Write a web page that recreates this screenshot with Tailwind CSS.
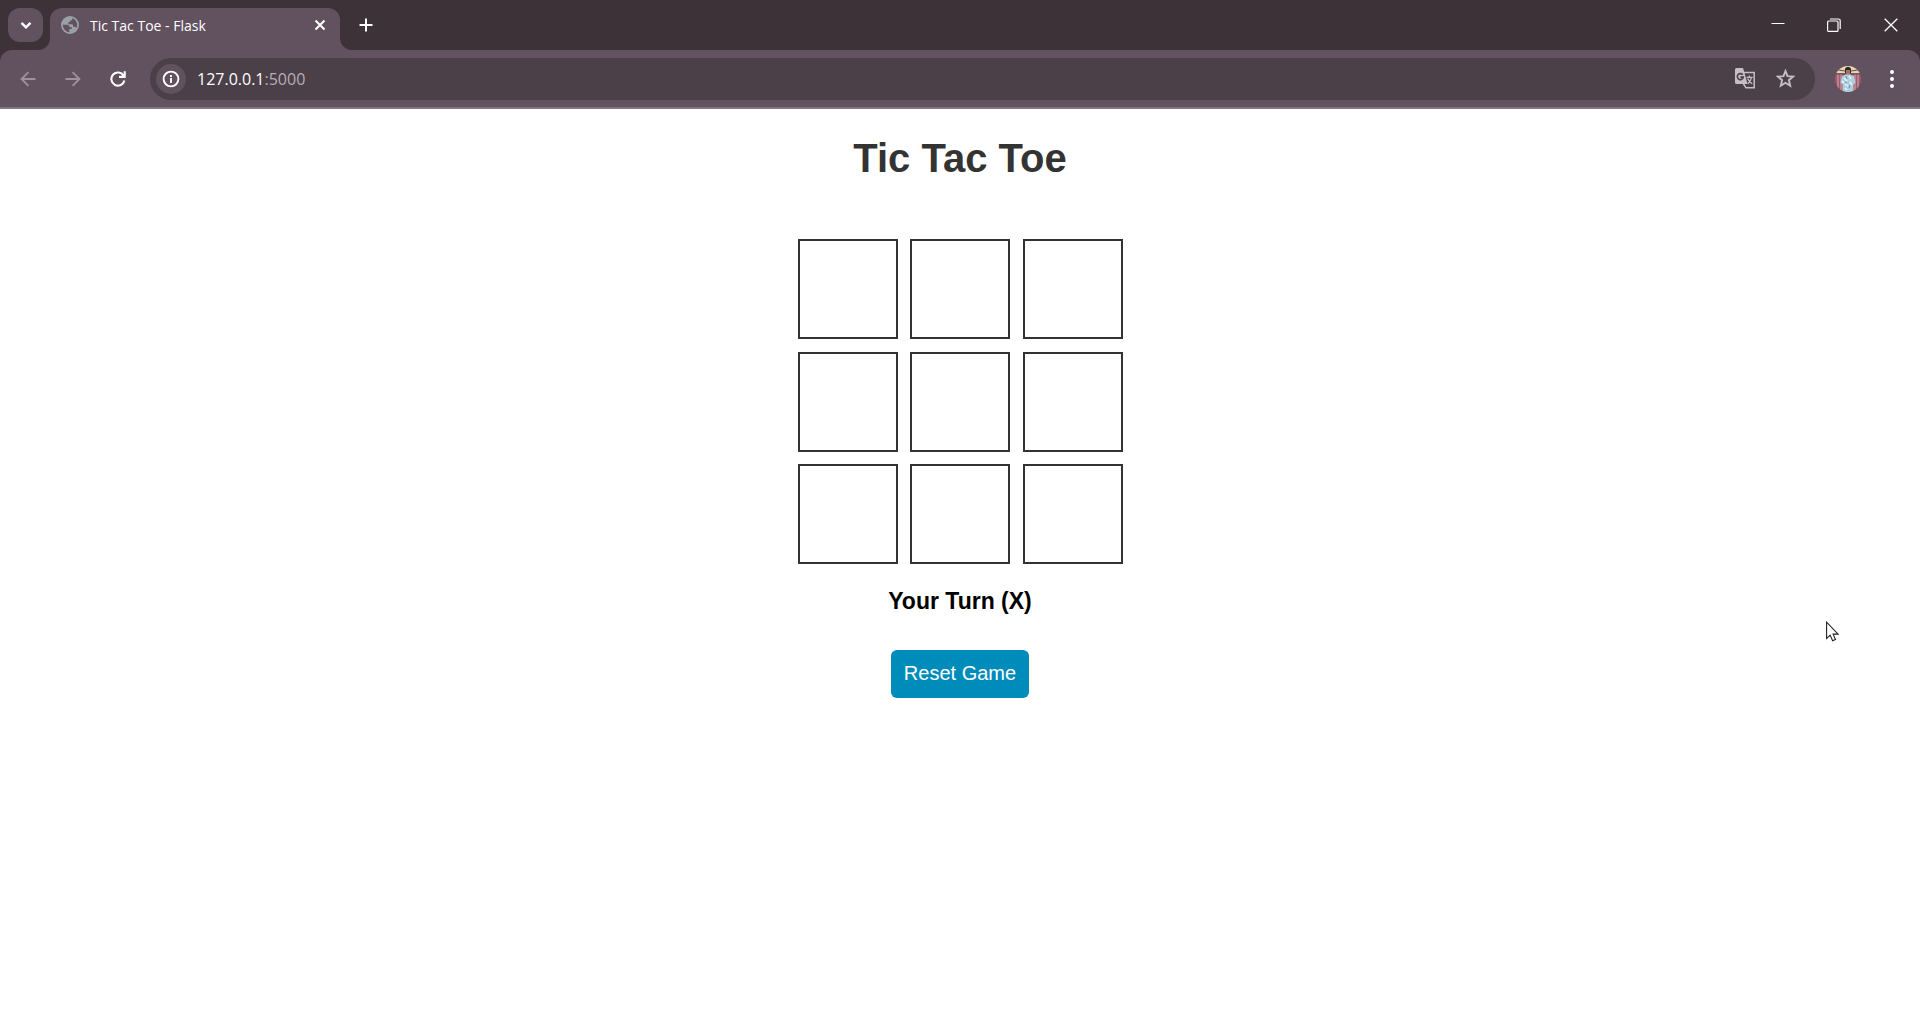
<!DOCTYPE html>
<html lang="en">
<head>
<meta charset="utf-8">
<title>Tic Tac Toe - Flask</title>
<script src="https://cdn.jsdelivr.net/npm/@tailwindcss/browser@4"></script>
</head>
<body class="min-h-screen bg-white font-['Liberation_Sans',Arial,sans-serif]">
<header class="bg-[#3d3238] font-['Open_Sans',sans-serif] text-white">
  <!-- Tab strip -->
  <div class="flex h-[50px] items-start">
    <button aria-label="Search tabs" class="mt-2 ml-2 flex h-[34px] w-[35px] items-center justify-center rounded-xl bg-[#62515e]">
      <svg class="size-4" viewBox="0 0 16 16" fill="none" stroke="currentColor" stroke-width="2.4"><path d="M3.500 5.800 8 10.300l4.500-4.500"/></svg>
    </button>
    <div class="relative mt-2 ml-[7px] flex h-[42px] w-[290px] items-start rounded-t-xl bg-[#62515e] pt-2 pr-[11px] pl-[11px]">
      <svg class="absolute bottom-0 -left-3 size-3 text-[#62515e]" viewBox="0 0 12 12" fill="currentColor"><path d="M12 0v12H0A12 12 0 0 0 12 0z"/></svg>
      <svg class="absolute -right-3 bottom-0 size-3 text-[#62515e]" viewBox="0 0 12 12" fill="currentColor"><path d="M0 0v12h12A12 12 0 0 1 0 0z"/></svg>
      <svg class="size-[18px]" viewBox="0 0 18 18"><circle cx="9" cy="9" r="9" fill="#9aa0a6"/><path d="M1.800 8.800H6c1.800 0 2.500.9 2.500 2.400h2.300v1.900H8.300v3.200A7.300 7.300 0 0 1 1.800 8.800z" fill="#62515e"/><path d="M11.200 2.100A7.300 7.300 0 0 1 15.600 11.900l-1.300-1.100H12V9.300c0-.7-.5-1.100-1.200-1.100H7.400V6h1.900V4.200h1.900z" fill="#62515e"/></svg>
      <span class="ml-[11px] flex-1 text-sm leading-[19px]">Tic Tac Toe - Flask</span>
      <button aria-label="Close tab" class="flex size-[18px] items-center justify-center">
        <svg class="size-3" viewBox="0 0 12 12" fill="none" stroke="currentColor" stroke-width="2"><path d="m1.500 1.500 9 9m0-9-9 9"/></svg>
      </button>
    </div>
    <button aria-label="New tab" class="mt-[17px] ml-[18px] flex size-4 items-center justify-center">
      <svg class="size-[14px]" viewBox="0 0 14 14" fill="none" stroke="currentColor" stroke-width="2"><path d="M7 .5v13M.5 7h13"/></svg>
    </button>
    <div class="ml-auto flex h-[50px] pr-px">
      <button aria-label="Minimize" class="flex w-14 items-center justify-center"><svg class="size-[14px]" viewBox="0 0 14 14" stroke="currentColor"><path d="M.5 5.500h13"/></svg></button>
      <button aria-label="Restore" class="flex w-14 items-center justify-center"><svg class="size-[14px]" viewBox="0 0 14 14" fill="none" stroke="currentColor" stroke-width="1.200"><rect x=".6" y="3" width="10.400" height="10.400" rx="1"/><path d="M3 1h8.500A1.700 1.700 0 0 1 13.200 2.700V11"/></svg></button>
      <button aria-label="Close" class="flex w-[57px] items-center justify-center"><svg class="size-[14px]" viewBox="0 0 14 14" fill="none" stroke="currentColor" stroke-width="1.300"><path d="m.7.7 12.600 12.600m0-12.600L.7 13.300"/></svg></button>
    </div>
  </div>

  <!-- Toolbar -->
  <div class="flex h-[59px] items-center rounded-t-xl border-b-2 border-[#84747f] bg-[#62515e] pr-[18px] pl-[18px]">
    <nav class="flex w-[132px] gap-[25px] text-[#9d919a]">
      <button aria-label="Back" class="flex size-5 items-center justify-center"><svg class="size-4" viewBox="0 0 16 16" fill="none" stroke="currentColor" stroke-width="1.900"><path d="M15.500 8H1.800m6.600-6.800L1.600 8l6.800 6.800"/></svg></button>
      <button aria-label="Forward" class="flex size-5 items-center justify-center"><svg class="size-4" viewBox="0 0 16 16" fill="none" stroke="currentColor" stroke-width="1.900"><path d="M.5 8h13.700M7.600 1.200 14.400 8l-6.800 6.800"/></svg></button>
      <button aria-label="Reload" class="flex size-5 items-center justify-center text-white"><svg class="size-4" viewBox="0 0 16 16" fill="none" stroke="currentColor" stroke-width="2.100"><path d="M13.600 4.600A6.600 6.600 0 1 0 14.400 9.500M14.700.3v5.600H9"/></svg></button>
    </nav>
    <div class="flex h-[42px] flex-1 items-center rounded-full bg-[#4b3f48] pr-5 pl-[6px]">
      <button aria-label="View site information" class="flex size-[30px] items-center justify-center rounded-full bg-[#62515e]">
        <svg class="size-[18px]" viewBox="0 0 18 18" fill="none" stroke="currentColor" stroke-width="1.900"><circle cx="9" cy="9" r="7.400"/><path d="M9 8v5M9 4.900v2"/></svg>
      </button>
      <div class="ml-[11px] flex-1 text-base" role="textbox" aria-label="Address">127.0.0.1<span class="text-[#b8aeb5]">:5000</span></div>
      <div class="flex items-center gap-5 text-[#c5bfc3]">
        <button aria-label="Translate this page">
          <svg class="size-[21px]" viewBox="0 0 21 21"><path d="M9 4.500h10.200v15.300H11L8.500 16" fill="none" stroke="currentColor" stroke-width="1.500"/><path d="M1.500 0H8l1.200 3.800L12.500 16h-11A1.500 1.500 0 0 1 0 14.500v-13A1.500 1.500 0 0 1 1.500 0z" fill="currentColor"/><path d="M7.700 6.800A3 3 0 1 0 8.300 9.100H5.400" fill="none" stroke="#4b3f48" stroke-width="1.600"/><path d="M11.500 9.300h6.300M14.400 7.400v1.900M16.500 9.500c-.5 2.600-1.900 4.600-3.600 6.300M12.700 10.500c.8 2 2.300 3.900 4.500 5.200" fill="none" stroke="currentColor" stroke-width="1.300"/></svg>
        </button>
        <button aria-label="Bookmark this tab">
          <svg class="size-[19px]" viewBox="0 0 19 19" fill="none" stroke="currentColor" stroke-width="1.900"><path d="m9.500 2 2 5.100 5.700.5-4.300 3.600 1.300 5.500-4.700-2.900-4.700 2.900 1.300-5.500-4.300-3.600 5.700-.5z"/></svg>
        </button>
      </div>
    </div>
    <button aria-label="Profile" class="ml-5">
      <svg class="size-[26px]" viewBox="0 0 26 26"><clipPath id="avatar"><circle cx="13" cy="13" r="13"/></clipPath><g clip-path="url(#avatar)"><path fill="#9d5a6b" d="M0 0h26v26H0z"/><path d="M3 8v18M6 8v18M20 8v18M23 8v18" stroke="#d8a9b5"/><path fill="#e5d6b4" d="M0 0h26v7H0z"/><path d="M0 3.500 10 5m6 0 10-1.500M1 8h9m6 0h9" stroke="#66504c" stroke-width="1.200"/><path d="M10 2.500q3-3.500 6 0v5h-6z" fill="#30272c"/><path d="M11 4h4v5h-4z" fill="#a17268"/><path d="M7 10 11 8.500h4l4 1.500 1.500 7-2 1v8h-11v-8l-2-1z" fill="#acd0e0"/><path d="m9 12 3 3m2-5 2 3m-6 5 3 2m2-4 2 3m-7 3 2 2m-5-9 2 2" stroke="#edf5f7" stroke-width="1.500"/><path d="m11 10 1 3m-2 3 2 1m3 2-1 3" stroke="#718fa9"/></g></svg>
    </button>
    <button aria-label="Browser menu" class="ml-[21px] flex w-5 justify-center"><svg class="h-[18px] w-1" viewBox="0 0 4 18" fill="currentColor"><circle cx="2" cy="2" r="2"/><circle cx="2" cy="9" r="2"/><circle cx="2" cy="16" r="2"/></svg></button>
  </div>
</header>

<main class="flex flex-col items-center pt-[25px]">
  <h1 class="text-[40px] leading-12 font-bold text-[#333]">Tic Tac Toe</h1>
  <div class="mt-[57px] grid size-[325px] grid-cols-[repeat(3,100px)] grid-rows-[repeat(3,100px)] content-between justify-between">
    <button aria-label="Cell 1" class="border-2 border-[#333]"></button>
    <button aria-label="Cell 2" class="border-2 border-[#333]"></button>
    <button aria-label="Cell 3" class="border-2 border-[#333]"></button>
    <button aria-label="Cell 4" class="border-2 border-[#333]"></button>
    <button aria-label="Cell 5" class="border-2 border-[#333]"></button>
    <button aria-label="Cell 6" class="border-2 border-[#333]"></button>
    <button aria-label="Cell 7" class="border-2 border-[#333]"></button>
    <button aria-label="Cell 8" class="border-2 border-[#333]"></button>
    <button aria-label="Cell 9" class="border-2 border-[#333]"></button>
  </div>
  <p class="mt-[23px] text-[23px] leading-7 font-bold text-black">Your Turn (X)</p>
  <button class="mt-[35px] h-12 rounded-md bg-[#008cba] px-[13px] pb-0.5 text-[20px] leading-6 text-white">Reset Game</button>
</main>

<!-- Mouse pointer -->
<svg class="pointer-events-none absolute top-[621px] left-[95.1%] h-[21px] w-[14px]" viewBox="0 0 14 21" aria-hidden="true"><path d="M.6 1.200v16.300l3.600-3.400 2.400 5.600 2.900-1.200-2.400-5.400h5z" fill="#fff" stroke="#222" stroke-width="1.100"/></svg>
</body>
</html>
